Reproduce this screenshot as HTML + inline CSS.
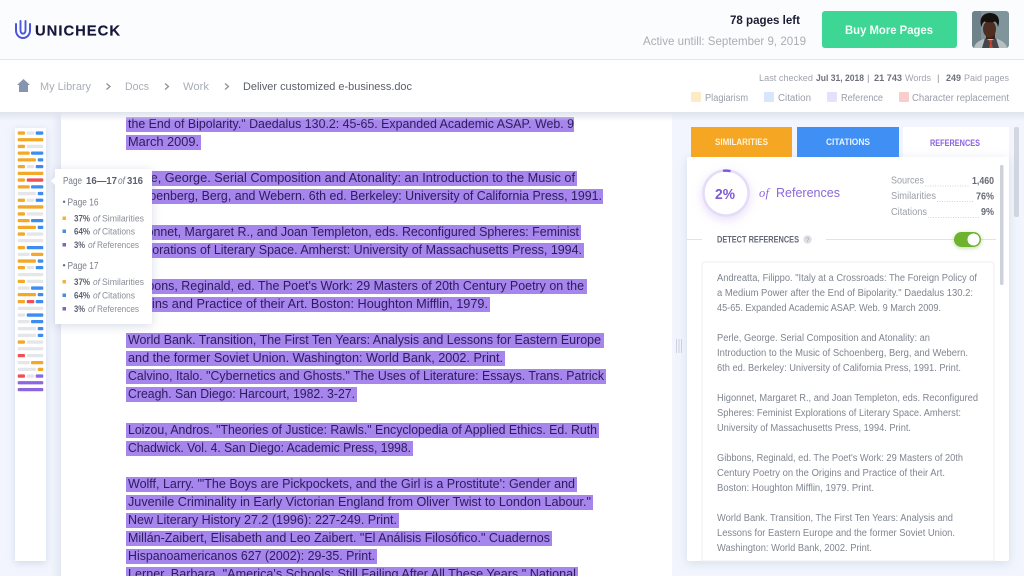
<!DOCTYPE html>
<html lang="en">
<head>
<meta charset="utf-8">
<title>Unicheck</title>
<style>
html,body{margin:0;padding:0;width:1024px;height:576px;overflow:hidden;background:#f2f5fd}
svg{display:block;position:absolute;left:0;top:0}
text{font-family:"Liberation Sans",Arial,sans-serif;white-space:pre}
.d{font-size:13.2px;fill:#2c1c5c}
.r{font-size:9.8px;fill:#80858f}
.h{fill:#a685ec}
.g{font-size:11px;fill:#a9adb6}
.t{font-size:9.4px;fill:#8a8e98}
.tb{font-size:9.4px;fill:#5c6170;font-weight:bold}
.ti{font-size:9.4px;fill:#8a8e98;font-style:italic}
.l{font-size:9.8px;fill:#9a9eaa}
.o{fill:#f2a828}.b{fill:#3f8cf0}.x{fill:#e4e6ea}.e{fill:#ef5058}.p{fill:#8d66e0}
</style>
</head>
<body>
<svg width="1024" height="576" viewBox="0 0 1024 576" xmlns="http://www.w3.org/2000/svg">
<defs>
<linearGradient id="sh" x1="0" y1="0" x2="0" y2="1"><stop offset="0" stop-color="#dfe3ec"/><stop offset="1" stop-color="#dfe3ec" stop-opacity="0"/></linearGradient>
<linearGradient id="sd" x1="0" y1="0" x2="1" y2="0"><stop offset="0" stop-color="#e6eaf4" stop-opacity="0"/><stop offset="1" stop-color="#e3e7f2"/></linearGradient>
<clipPath id="av"><rect x="972" y="11" width="37" height="37" rx="3"/></clipPath>
</defs>

<!-- backgrounds -->
<rect width="1024" height="576" fill="#f2f5fd"/>
<rect x="61" y="112" width="611" height="464" fill="#ffffff"/>
<rect x="51" y="112" width="10" height="464" fill="url(#sd)"/>

<!-- document highlights -->
<g class="h">
<rect x="126" y="117" width="448" height="15"/>
<rect x="126" y="135" width="75" height="15"/>
<rect x="126" y="171" width="451" height="15"/>
<rect x="126" y="189" width="477" height="15"/>
<rect x="126" y="225" width="455" height="15"/>
<rect x="126" y="243" width="458" height="15"/>
<rect x="126" y="279" width="461" height="15"/>
<rect x="126" y="297" width="364" height="15"/>
<rect x="126" y="333" width="478" height="15"/>
<rect x="126" y="351" width="379" height="15"/>
<rect x="126" y="369" width="480" height="15"/>
<rect x="126" y="387" width="231" height="15"/>
<rect x="126" y="423" width="473" height="15"/>
<rect x="126" y="441" width="287" height="15"/>
<rect x="126" y="477" width="451" height="15"/>
<rect x="126" y="495" width="467" height="15"/>
<rect x="126" y="513" width="273" height="15"/>
<rect x="126" y="531" width="426" height="15"/>
<rect x="126" y="549" width="251" height="15"/>
<rect x="126" y="567" width="452" height="15"/>
</g>
<!-- document text -->
<g class="d">
<text x="128" y="128" textLength="446" lengthAdjust="spacingAndGlyphs">the End of Bipolarity." Daedalus 130.2: 45-65. Expanded Academic ASAP. Web. 9</text>
<text x="128" y="146" textLength="71" lengthAdjust="spacingAndGlyphs">March 2009.</text>
<text x="128" y="182" textLength="447" lengthAdjust="spacingAndGlyphs">Perle, George. Serial Composition and Atonality: an Introduction to the Music of</text>
<text x="128" y="200" textLength="474" lengthAdjust="spacingAndGlyphs">Schoenberg, Berg, and Webern. 6th ed. Berkeley: University of California Press, 1991.</text>
<text x="128" y="236" textLength="451" lengthAdjust="spacingAndGlyphs">Higonnet, Margaret R., and Joan Templeton, eds. Reconfigured Spheres: Feminist</text>
<text x="128" y="254" textLength="454" lengthAdjust="spacingAndGlyphs">Explorations of Literary Space. Amherst: University of Massachusetts Press, 1994.</text>
<text x="128" y="290" textLength="456" lengthAdjust="spacingAndGlyphs">Gibbons, Reginald, ed. The Poet's Work: 29 Masters of 20th Century Poetry on the</text>
<text x="128" y="308" textLength="360" lengthAdjust="spacingAndGlyphs">Origins and Practice of their Art. Boston: Houghton Mifflin, 1979.</text>
<text x="128" y="344" textLength="473" lengthAdjust="spacingAndGlyphs">World Bank. Transition, The First Ten Years: Analysis and Lessons for Eastern Europe</text>
<text x="128" y="362" textLength="375" lengthAdjust="spacingAndGlyphs">and the former Soviet Union. Washington: World Bank, 2002. Print.</text>
<text x="128" y="380" textLength="476" lengthAdjust="spacingAndGlyphs">Calvino, Italo. "Cybernetics and Ghosts." The Uses of Literature: Essays. Trans. Patrick</text>
<text x="128" y="398" textLength="227" lengthAdjust="spacingAndGlyphs">Creagh. San Diego: Harcourt, 1982. 3-27.</text>
<text x="128" y="434" textLength="469" lengthAdjust="spacingAndGlyphs">Loizou, Andros. "Theories of Justice: Rawls." Encyclopedia of Applied Ethics. Ed. Ruth</text>
<text x="128" y="452" textLength="283" lengthAdjust="spacingAndGlyphs">Chadwick. Vol. 4. San Diego: Academic Press, 1998.</text>
<text x="128" y="488" textLength="447" lengthAdjust="spacingAndGlyphs">Wolff, Larry. "'The Boys are Pickpockets, and the Girl is a Prostitute': Gender and</text>
<text x="128" y="506" textLength="463" lengthAdjust="spacingAndGlyphs">Juvenile Criminality in Early Victorian England from Oliver Twist to London Labour."</text>
<text x="128" y="524" textLength="269" lengthAdjust="spacingAndGlyphs">New Literary History 27.2 (1996): 227-249. Print.</text>
<text x="128" y="542" textLength="422" lengthAdjust="spacingAndGlyphs">Millán-Zaibert, Elisabeth and Leo Zaibert. "El Análisis Filosófico." Cuadernos</text>
<text x="128" y="560" textLength="247" lengthAdjust="spacingAndGlyphs">Hispanoamericanos 627 (2002): 29-35. Print.</text>
<text x="128" y="578" textLength="448" lengthAdjust="spacingAndGlyphs">Lerner, Barbara. "America's Schools: Still Failing After All These Years." National</text>
</g>

<!-- top shadow under bars -->
<rect x="0" y="112" width="1024" height="9" fill="url(#sh)"/>

<!-- header -->
<rect width="1024" height="59" fill="#fbfcfe"/>
<rect y="59" width="1024" height="1" fill="#e4e6eb"/>
<rect y="60" width="1024" height="52" fill="#ffffff"/>

<!-- logo -->
<g fill="none" stroke="#4a55dc" stroke-linecap="round">
<path d="M16 24v6.500a7 7.500 0 0 0 14 0V24" stroke-width="2"/>
<path d="M20.500 21v9.500a2.500 3.200 0 0 0 5 0V21" stroke-width="1.900"/>
</g>
<text x="35" y="35.500" font-size="14.800" font-weight="bold" fill="#14163a" stroke="#14163a" stroke-width=".15" textLength="85">UNICHECK</text>

<!-- account -->
<text x="730" y="24" font-size="11.500" font-weight="bold" fill="#1b1d33" textLength="70" lengthAdjust="spacingAndGlyphs">78 pages left</text>
<text x="643" y="45" font-size="11.800" fill="#a9adb5" textLength="163" lengthAdjust="spacingAndGlyphs">Active untill: September 9, 2019</text>
<rect x="822" y="11" width="135" height="37" rx="3" fill="#3dd695"/>
<text x="845" y="34" font-size="11.500" font-weight="bold" fill="#f2fff9" textLength="88" lengthAdjust="spacingAndGlyphs">Buy More Pages</text>

<!-- avatar -->
<g clip-path="url(#av)">
<rect x="972" y="11" width="37" height="37" fill="#80949b"/>
<path d="M972 11h9v37h-9z" fill="#6f8289"/>
<path d="M974 48c1-6 7-8 12-10h9c5 2 11 4 12 10z" fill="#b7bfc2"/>
<path d="M982 48l3-10 5.500 3 5.500-3 3 10z" fill="#41474a"/>
<path d="M988.500 40h4l-1 3 1.500 5h-4l1-5z" fill="#c4452c"/>
<rect x="986" y="33" width="9" height="6" fill="#3a2118"/>
<ellipse cx="989.500" cy="29" rx="6.500" ry="8.500" fill="#4e2e20"/>
<path d="M981.500 27c-2.500-7 0-14 8.500-14s10.500 7 8 14c-.5-3-1.500-4.500-3-5.500-3.500 1-7.500 1-10.500 0-1.500 1-2.500 2.500-3 5.500z" fill="#14110f"/>
</g>

<!-- breadcrumb -->
<path d="M23.500 79l-6.500 6h2v7h9v-7h2z" fill="#8794ad"/>
<text x="40" y="90" class="g" textLength="51" lengthAdjust="spacingAndGlyphs">My Library</text>
<text x="125" y="90" class="g" textLength="24" lengthAdjust="spacingAndGlyphs">Docs</text>
<text x="183" y="90" class="g" textLength="26" lengthAdjust="spacingAndGlyphs">Work</text>
<text x="243" y="90" font-size="11.300" fill="#5c6068" textLength="169" lengthAdjust="spacingAndGlyphs">Deliver customized e-business.doc</text>
<g fill="none" stroke="#8d929c" stroke-width="1.300">
<path d="M106.500 83.500l3.500 3-3.500 3"/>
<path d="M165 83.500l3.500 3-3.500 3"/>
<path d="M225 83.500l3.500 3-3.500 3"/>
</g>

<!-- meta -->
<text x="759" y="81" font-size="9.600px" fill="#a0a4ad" textLength="54" lengthAdjust="spacingAndGlyphs">Last checked</text>
<text x="816" y="81" font-size="9.600px" font-weight="bold" fill="#6d717b" textLength="48" lengthAdjust="spacingAndGlyphs">Jul 31, 2018</text>
<text x="867" y="81" font-size="9.600px" fill="#8d919a">|</text>
<text x="874" y="81" font-size="9.600px" font-weight="bold" fill="#6d717b" textLength="28" lengthAdjust="spacingAndGlyphs">21 743</text>
<text x="905" y="81" font-size="9.600px" fill="#a0a4ad" textLength="26" lengthAdjust="spacingAndGlyphs">Words</text>
<text x="937" y="81" font-size="9.600px" fill="#8d919a">|</text>
<text x="946" y="81" font-size="9.600px" font-weight="bold" fill="#6d717b" textLength="15" lengthAdjust="spacingAndGlyphs">249</text>
<text x="964" y="81" font-size="9.600px" fill="#a0a4ad" textLength="45" lengthAdjust="spacingAndGlyphs">Paid pages</text>

<!-- legend -->
<rect x="691" y="92" width="10" height="10" rx="1" fill="#fdebc6"/>
<rect x="764" y="92" width="10" height="10" rx="1" fill="#d8e6fb"/>
<rect x="827" y="92" width="10" height="10" rx="1" fill="#e6e0fa"/>
<rect x="899" y="92" width="10" height="10" rx="1" fill="#fbcccc"/>
<text x="705" y="101" class="l" textLength="43" lengthAdjust="spacingAndGlyphs">Plagiarism</text>
<text x="778" y="101" class="l" textLength="33" lengthAdjust="spacingAndGlyphs">Citation</text>
<text x="841" y="101" class="l" textLength="42" lengthAdjust="spacingAndGlyphs">Reference</text>
<text x="912" y="101" class="l" textLength="97" lengthAdjust="spacingAndGlyphs">Character replacement</text>

<!-- minimap -->
<rect x="15" y="128" width="31" height="433" fill="#ffffff" style="filter:drop-shadow(0 2px 4px rgba(120,135,170,.25))"/>
<g>
<rect class="o" x="17.700" y="131.400" width="7.300" height="3.300" rx="1"/><rect class="x" x="26.700" y="131.400" width="7.600" height="3.300" rx="1"/><rect class="b" x="35.700" y="131.400" width="7.600" height="3.300" rx="1"/>
<rect class="o" x="17.700" y="138.100" width="25.600" height="3.300" rx="1"/>
<rect class="o" x="17.700" y="144.800" width="7.300" height="3.300" rx="1"/><rect class="x" x="26.700" y="144.800" width="16.600" height="3.300" rx="1"/>
<rect class="o" x="17.700" y="151.500" width="12" height="3.300" rx="1"/><rect class="b" x="31" y="151.500" width="12.300" height="3.300" rx="1"/>
<rect class="o" x="17.700" y="158.200" width="18.300" height="3.300" rx="1"/><rect class="b" x="37.700" y="158.200" width="5.600" height="3.300" rx="1"/>
<rect class="o" x="17.700" y="165" width="7.300" height="3.300" rx="1"/><rect class="x" x="26.700" y="165" width="7.600" height="3.300" rx="1"/><rect class="b" x="35.700" y="165" width="7.600" height="3.300" rx="1"/>
<rect class="o" x="17.700" y="171.700" width="25.600" height="3.300" rx="1"/>
<rect class="o" x="17.700" y="178.400" width="7.300" height="3.300" rx="1"/><rect class="e" x="26.700" y="178.400" width="16.600" height="3.300" rx="1"/>
<rect class="o" x="17.700" y="185.200" width="12" height="3.300" rx="1"/><rect class="b" x="31" y="185.200" width="12.300" height="3.300" rx="1"/>
<rect class="x" x="17.700" y="191.900" width="18.300" height="3.300" rx="1"/><rect class="b" x="37.700" y="191.900" width="5.600" height="3.300" rx="1"/>
<rect class="o" x="17.700" y="198.600" width="7.300" height="3.300" rx="1"/><rect class="x" x="26.700" y="198.600" width="7.600" height="3.300" rx="1"/><rect class="b" x="35.700" y="198.600" width="7.600" height="3.300" rx="1"/>
<rect class="o" x="17.700" y="205.300" width="25.600" height="3.300" rx="1"/>
<rect class="o" x="17.700" y="212.300" width="7.300" height="3.300" rx="1"/><rect class="x" x="26.700" y="212.300" width="16.600" height="3.300" rx="1"/>
<rect class="o" x="17.700" y="219" width="12" height="3.300" rx="1"/><rect class="b" x="31" y="219" width="12.300" height="3.300" rx="1"/>
<rect class="o" x="17.700" y="225.700" width="18.300" height="3.300" rx="1"/><rect class="b" x="37.700" y="225.700" width="5.600" height="3.300" rx="1"/>
<rect class="o" x="17.700" y="232.400" width="7.300" height="3.300" rx="1"/><rect class="x" x="26.700" y="232.400" width="16.600" height="3.300" rx="1"/>
<rect class="x" x="17.700" y="239" width="25.600" height="3.300" rx="1"/>
<rect class="o" x="17.700" y="246" width="7.300" height="3.300" rx="1"/><rect class="b" x="26.700" y="246" width="16.600" height="3.300" rx="1"/>
<rect class="x" x="17.700" y="252.700" width="12" height="3.300" rx="1"/><rect class="o" x="31" y="252.700" width="12.300" height="3.300" rx="1"/>
<rect class="o" x="17.700" y="259.400" width="18.300" height="3.300" rx="1"/><rect class="b" x="37.700" y="259.400" width="5.600" height="3.300" rx="1"/>
<rect class="o" x="17.700" y="266" width="7.300" height="3.300" rx="1"/><rect class="x" x="26.700" y="266" width="7.600" height="3.300" rx="1"/><rect class="b" x="35.700" y="266" width="7.600" height="3.300" rx="1"/>
<rect class="x" x="17.700" y="273" width="25.600" height="3.300" rx="1"/>
<rect class="o" x="17.700" y="279.700" width="7.300" height="3.300" rx="1"/><rect class="x" x="26.700" y="279.700" width="16.600" height="3.300" rx="1"/>
<rect class="x" x="17.700" y="286.400" width="12" height="3.300" rx="1"/><rect class="b" x="31" y="286.400" width="12.300" height="3.300" rx="1"/>
<rect class="o" x="17.700" y="293" width="18.300" height="3.300" rx="1"/><rect class="b" x="37.700" y="293" width="5.600" height="3.300" rx="1"/>
<rect class="o" x="17.700" y="300" width="7.300" height="3.300" rx="1"/><rect class="e" x="26.700" y="300" width="7.600" height="3.300" rx="1"/><rect class="b" x="35.700" y="300" width="7.600" height="3.300" rx="1"/>
<rect class="x" x="17.700" y="306.700" width="25.600" height="3.300" rx="1"/>
<rect class="x" x="17.700" y="313.400" width="7.300" height="3.300" rx="1"/><rect class="b" x="26.700" y="313.400" width="16.600" height="3.300" rx="1"/>
<rect class="x" x="17.700" y="320" width="12" height="3.300" rx="1"/><rect class="b" x="31" y="320" width="12.300" height="3.300" rx="1"/>
<rect class="x" x="17.700" y="327" width="18.300" height="3.300" rx="1"/><rect class="b" x="37.700" y="327" width="5.600" height="3.300" rx="1"/>
<rect class="x" x="17.700" y="333.700" width="18.300" height="3.300" rx="1"/><rect class="b" x="37.700" y="333.700" width="5.600" height="3.300" rx="1"/>
<rect class="o" x="17.700" y="340.400" width="7.300" height="3.300" rx="1"/><rect class="x" x="26.700" y="340.400" width="16.600" height="3.300" rx="1"/>
<rect class="x" x="17.700" y="347.100" width="25.600" height="3.300" rx="1"/>
<rect class="e" x="17.700" y="354" width="7.300" height="3.300" rx="1"/><rect class="x" x="26.700" y="354" width="16.600" height="3.300" rx="1"/>
<rect class="x" x="17.700" y="361" width="12" height="3.300" rx="1"/><rect class="o" x="31" y="361" width="12.300" height="3.300" rx="1"/>
<rect class="x" x="17.700" y="367.700" width="18.300" height="3.300" rx="1"/><rect class="o" x="37.700" y="367.700" width="5.600" height="3.300" rx="1"/>
<rect class="e" x="17.700" y="374.400" width="7.300" height="3.300" rx="1"/><rect class="x" x="26.700" y="374.400" width="7.600" height="3.300" rx="1"/><rect class="p" x="35.700" y="374.400" width="7.600" height="3.300" rx="1"/>
<rect class="p" x="17.700" y="381.100" width="25.600" height="3.300" rx="1"/>
<rect class="p" x="17.700" y="388" width="25.600" height="3.300" rx="1"/>
</g>

<!-- tooltip -->
<path d="M55 169h97v155H55v-139l-4-4 4-4z" fill="#ffffff" style="filter:drop-shadow(0 2px 5px rgba(110,125,160,.28))"/>
<text x="63" y="184" font-size="10px" fill="#777b86" textLength="19" lengthAdjust="spacingAndGlyphs">Page</text>
<text x="86" y="184" font-size="10px" font-weight="bold" fill="#5c6170" textLength="31" lengthAdjust="spacingAndGlyphs">16—17</text>
<text x="118" y="184" font-size="10px" font-style="italic" fill="#777b86" textLength="7" lengthAdjust="spacingAndGlyphs">of</text>
<text x="127" y="184" font-size="10px" font-weight="bold" fill="#5c6170" textLength="16" lengthAdjust="spacingAndGlyphs">316</text>

<text x="62.500" y="205" font-size="9px" fill="#6d717b">•</text>
<text x="67.500" y="205.500" font-size="10px" fill="#7a7e89" textLength="31" lengthAdjust="spacingAndGlyphs">Page 16</text>
<rect x="62.500" y="216.500" width="3.500" height="3.500" fill="#efb33e"/>
<text x="74" y="221.500" class="tb" textLength="16" lengthAdjust="spacingAndGlyphs">37%</text><text x="93" y="221.500" class="ti" textLength="7" lengthAdjust="spacingAndGlyphs">of</text><text x="102" y="221.500" class="t" textLength="42" lengthAdjust="spacingAndGlyphs">Similarities</text>
<rect x="62.500" y="229.500" width="3.500" height="3.500" fill="#4a8de0"/>
<text x="74" y="234.500" class="tb" textLength="16" lengthAdjust="spacingAndGlyphs">64%</text><text x="93" y="234.500" class="ti" textLength="7" lengthAdjust="spacingAndGlyphs">of</text><text x="102" y="234.500" class="t" textLength="33" lengthAdjust="spacingAndGlyphs">Citations</text>
<rect x="62.500" y="243" width="3.500" height="3.500" fill="#7e63c8"/>
<text x="74" y="248" class="tb" textLength="11" lengthAdjust="spacingAndGlyphs">3%</text><text x="88" y="248" class="ti" textLength="7" lengthAdjust="spacingAndGlyphs">of</text><text x="97" y="248" class="t" textLength="42" lengthAdjust="spacingAndGlyphs">References</text>

<text x="62.500" y="268.500" font-size="9px" fill="#6d717b">•</text>
<text x="67.500" y="269" font-size="10px" fill="#7a7e89" textLength="31" lengthAdjust="spacingAndGlyphs">Page 17</text>
<rect x="62.500" y="280" width="3.500" height="3.500" fill="#efb33e"/>
<text x="74" y="285" class="tb" textLength="16" lengthAdjust="spacingAndGlyphs">37%</text><text x="93" y="285" class="ti" textLength="7" lengthAdjust="spacingAndGlyphs">of</text><text x="102" y="285" class="t" textLength="42" lengthAdjust="spacingAndGlyphs">Similarities</text>
<rect x="62.500" y="293.500" width="3.500" height="3.500" fill="#4a8de0"/>
<text x="74" y="298.500" class="tb" textLength="16" lengthAdjust="spacingAndGlyphs">64%</text><text x="93" y="298.500" class="ti" textLength="7" lengthAdjust="spacingAndGlyphs">of</text><text x="102" y="298.500" class="t" textLength="33" lengthAdjust="spacingAndGlyphs">Citations</text>
<rect x="62.500" y="307" width="3.500" height="3.500" fill="#7e63c8"/>
<text x="74" y="312" class="tb" textLength="11" lengthAdjust="spacingAndGlyphs">3%</text><text x="88" y="312" class="ti" textLength="7" lengthAdjust="spacingAndGlyphs">of</text><text x="97" y="312" class="t" textLength="42" lengthAdjust="spacingAndGlyphs">References</text>

<!-- drag handle -->
<g fill="#cfd3dd">
<rect x="676" y="339" width="1" height="14"/>
<rect x="678.500" y="339" width="1" height="14"/>
<rect x="681" y="339" width="1" height="14"/>
</g>

<!-- right panel -->
<rect x="1014" y="127" width="5" height="90" rx="2" fill="#d3d7e0"/>
<rect x="903" y="127" width="106" height="40" fill="#ffffff"/>
<rect x="687" y="157" width="322" height="404" rx="2" fill="#ffffff" style="filter:drop-shadow(0 2px 5px rgba(120,135,170,.22))"/>
<rect x="691" y="127" width="101" height="30" fill="#f5a623"/>
<rect x="797" y="127" width="102" height="30" fill="#3f8ff5"/>
<text x="715" y="145" font-size="9px" font-weight="bold" fill="#fff3d8" textLength="53" lengthAdjust="spacingAndGlyphs">SIMILARITIES</text>
<text x="826" y="145" font-size="9px" font-weight="bold" fill="#eaf3ff" textLength="44" lengthAdjust="spacingAndGlyphs">CITATIONS</text>
<text x="930" y="146" font-size="9px" font-weight="bold" fill="#8a62e0" textLength="50" lengthAdjust="spacingAndGlyphs">REFERENCES</text>

<!-- ring -->
<circle cx="726" cy="193" r="22.500" fill="#ffffff" stroke="#e4dcf8" stroke-width="2.500" style="filter:drop-shadow(0 3px 5px rgba(140,100,225,.22))"/>
<path d="M724 170.700a22.500 22.500 0 0 1 5.500 .3" fill="none" stroke="#8259de" stroke-width="2.500" stroke-linecap="round"/>
<text x="715" y="199" font-size="14.500px" font-weight="bold" fill="#7f59d2" textLength="20" lengthAdjust="spacingAndGlyphs">2%</text>
<text x="759" y="197" font-size="12.500px" font-style="italic" fill="#8b68d8" textLength="10" style="font-family:'Liberation Serif',serif">of</text>
<text x="776" y="197" font-size="13px" fill="#8b68d8" textLength="64" lengthAdjust="spacingAndGlyphs">References</text>

<!-- stats -->
<text x="891" y="183.500" font-size="10.200px" fill="#9a9ea8" textLength="33" lengthAdjust="spacingAndGlyphs">Sources</text>
<path d="M925 186h45" stroke="#c4c7ce" stroke-width=".8" stroke-dasharray="1 1.500"/>
<text x="972" y="184" font-size="10px" font-weight="bold" fill="#666a75" textLength="22" lengthAdjust="spacingAndGlyphs">1,460</text>
<text x="891" y="199" font-size="10.200px" fill="#9a9ea8" textLength="45" lengthAdjust="spacingAndGlyphs">Similarities</text>
<path d="M937 201.500h37" stroke="#c4c7ce" stroke-width=".8" stroke-dasharray="1 1.500"/>
<text x="976" y="199.500" font-size="10px" font-weight="bold" fill="#666a75" textLength="18" lengthAdjust="spacingAndGlyphs">76%</text>
<text x="891" y="215" font-size="10.200px" fill="#9a9ea8" textLength="36" lengthAdjust="spacingAndGlyphs">Citations</text>
<path d="M928 217.500h51" stroke="#c4c7ce" stroke-width=".8" stroke-dasharray="1 1.500"/>
<text x="981" y="215" font-size="10px" font-weight="bold" fill="#666a75" textLength="13" lengthAdjust="spacingAndGlyphs">9%</text>

<!-- detect row -->
<path d="M687 239.500h15M826 239.500h128M981 239.500h15" stroke="#e1e3e8" stroke-width="1"/>
<text x="717" y="242.500" font-size="9px" font-weight="bold" fill="#626773" textLength="82" lengthAdjust="spacingAndGlyphs">DETECT REFERENCES</text>
<circle cx="807.500" cy="239.500" r="4.200" fill="#dcdfe3"/>
<text x="805.700" y="242" font-size="6.500px" fill="#a2a6ae">?</text>
<rect x="954" y="232" width="27" height="15" rx="7.500" fill="#6eb22e" style="filter:drop-shadow(0 1px 2px rgba(90,150,40,.4))"/>
<circle cx="973.500" cy="239.500" r="6" fill="#ffffff"/>

<!-- reference card -->
<path d="M702 561V265a3 3 0 0 1 3-3h286a3 3 0 0 1 3 3v296z" fill="#ffffff" stroke="#eceef2" stroke-width="1"/>
<rect x="1000" y="165" width="3.500" height="120" rx="1.500" fill="#cdd1da"/>
<g class="r">
<text x="717" y="281" textLength="260" lengthAdjust="spacingAndGlyphs">Andreatta, Filippo. "Italy at a Crossroads: The Foreign Policy of</text>
<text x="717" y="296" textLength="256" lengthAdjust="spacingAndGlyphs">a Medium Power after the End of Bipolarity." Daedalus 130.2:</text>
<text x="717" y="311" textLength="224" lengthAdjust="spacingAndGlyphs">45-65. Expanded Academic ASAP. Web. 9 March 2009.</text>
<text x="717" y="341" textLength="213" lengthAdjust="spacingAndGlyphs">Perle, George. Serial Composition and Atonality: an</text>
<text x="717" y="356" textLength="251" lengthAdjust="spacingAndGlyphs">Introduction to the Music of Schoenberg, Berg, and Webern.</text>
<text x="717" y="371" textLength="244" lengthAdjust="spacingAndGlyphs">6th ed. Berkeley: University of California Press, 1991. Print.</text>
<text x="717" y="401" textLength="261" lengthAdjust="spacingAndGlyphs">Higonnet, Margaret R., and Joan Templeton, eds. Reconfigured</text>
<text x="717" y="416" textLength="244" lengthAdjust="spacingAndGlyphs">Spheres: Feminist Explorations of Literary Space. Amherst:</text>
<text x="717" y="431" textLength="194" lengthAdjust="spacingAndGlyphs">University of Massachusetts Press, 1994. Print.</text>
<text x="717" y="461" textLength="246" lengthAdjust="spacingAndGlyphs">Gibbons, Reginald, ed. The Poet's Work: 29 Masters of 20th</text>
<text x="717" y="476" textLength="228" lengthAdjust="spacingAndGlyphs">Century Poetry on the Origins and Practice of their Art.</text>
<text x="717" y="491" textLength="157" lengthAdjust="spacingAndGlyphs">Boston: Houghton Mifflin, 1979. Print.</text>
<text x="717" y="521" textLength="236" lengthAdjust="spacingAndGlyphs">World Bank. Transition, The First Ten Years: Analysis and</text>
<text x="717" y="536" textLength="238" lengthAdjust="spacingAndGlyphs">Lessons for Eastern Europe and the former Soviet Union.</text>
<text x="717" y="551" textLength="155" lengthAdjust="spacingAndGlyphs">Washington: World Bank, 2002. Print.</text>
</g>
</svg>
</body>
</html>
